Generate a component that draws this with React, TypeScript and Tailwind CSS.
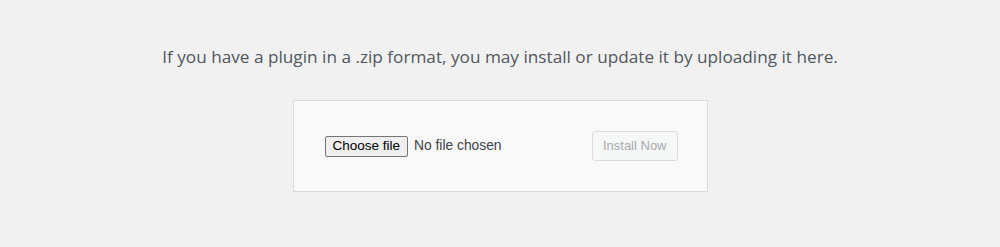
export default function App() {
  return (
    <div className="h-[247px] w-full bg-[#f1f1f1] flex flex-col items-center font-['Liberation_Sans',Arial,sans-serif]">
      <p className="mt-[44px] font-['Open_Sans',sans-serif] text-[17.2px] leading-[25px] text-[#50575e]">
        If you have a plugin in a .zip format, you may install or update it by uploading it here.
      </p>

      <div className="mt-[31px] w-[415px] h-[92px] bg-[#f9f9f9] border border-[#dcdcde] flex items-center justify-between pl-[31px] pr-[29px]">
        <div className="flex items-center gap-[6px] mt-[1px]">
          <span className="h-[21px] px-[7px] flex items-center bg-[#efefef] border border-[#767676] rounded-[2px] text-[13.5px] text-black">
            Choose file
          </span>
          <span className="text-[13.8px] text-[#3c434a]">No file chosen</span>
        </div>
        <button
          disabled
          className="h-[30px] px-[10px] border border-[#dcdcde] bg-[#f6f7f7] rounded-[3px] text-[13px] text-[#a7aaad]"
        >
          Install Now
        </button>
      </div>
    </div>
  );
}
